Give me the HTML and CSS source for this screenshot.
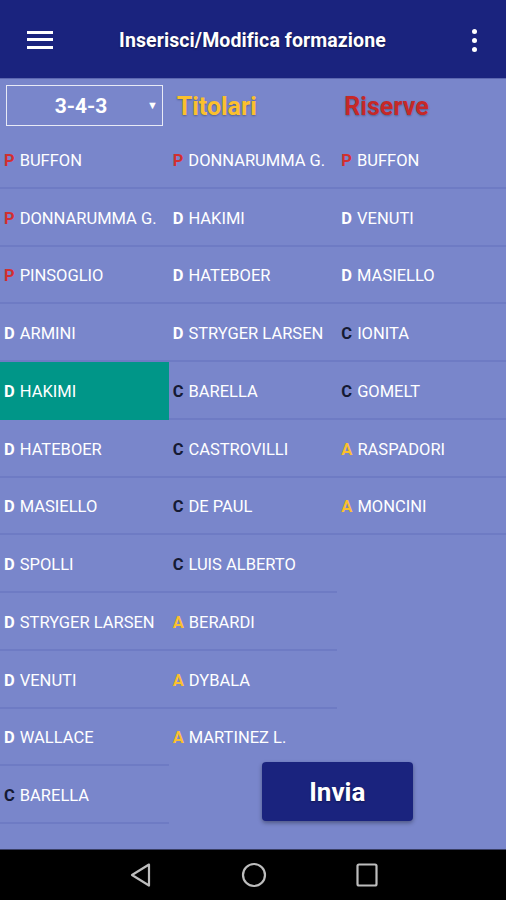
FILE: index.html
```html
<!DOCTYPE html>
<html lang="it">
<head>
<meta charset="utf-8">
<title>Inserisci/Modifica formazione</title>
<link rel="stylesheet" href="styles.css">
</head>
<body>
<div class="screen">
  <header class="appbar">
    <div class="menu-btn"><span></span><span></span><span></span></div>
    <h1 class="title">Inserisci/Modifica formazione</h1>
    <div class="kebab"><span></span><span></span><span></span></div>
  </header>

  <div class="subheader">
    <div class="cell">
      <div class="select"><span class="select-value">3-4-3</span><span class="select-arrow">&#9660;</span></div>
    </div>
    <div class="cell"><span class="head head-tit">Titolari</span></div>
    <div class="cell"><span class="head head-ris">Riserve</span></div>
  </div>

  <main class="lists">
    <ul class="list">
      <li class="row"><b class="r r-p">P</b>BUFFON</li>
      <li class="row"><b class="r r-p">P</b>DONNARUMMA G.</li>
      <li class="row"><b class="r r-p">P</b>PINSOGLIO</li>
      <li class="row"><b class="r r-d">D</b>ARMINI</li>
      <li class="row selected"><b class="r r-d">D</b>HAKIMI</li>
      <li class="row"><b class="r r-d">D</b>HATEBOER</li>
      <li class="row"><b class="r r-d">D</b>MASIELLO</li>
      <li class="row"><b class="r r-d">D</b>SPOLLI</li>
      <li class="row"><b class="r r-d">D</b>STRYGER LARSEN</li>
      <li class="row"><b class="r r-d">D</b>VENUTI</li>
      <li class="row"><b class="r r-d">D</b>WALLACE</li>
      <li class="row"><b class="r r-c">C</b>BARELLA</li>
    </ul>
    <div class="right">
      <div class="right-lists">
        <ul class="list list-tit">
          <li class="row"><b class="r r-p">P</b>DONNARUMMA G.</li>
          <li class="row"><b class="r r-d">D</b>HAKIMI</li>
          <li class="row"><b class="r r-d">D</b>HATEBOER</li>
          <li class="row"><b class="r r-d">D</b>STRYGER LARSEN</li>
          <li class="row"><b class="r r-c">C</b>BARELLA</li>
          <li class="row"><b class="r r-c">C</b>CASTROVILLI</li>
          <li class="row"><b class="r r-c">C</b>DE PAUL</li>
          <li class="row"><b class="r r-c">C</b>LUIS ALBERTO</li>
          <li class="row"><b class="r r-a">A</b>BERARDI</li>
          <li class="row"><b class="r r-a">A</b>DYBALA</li>
          <li class="row"><b class="r r-a">A</b>MARTINEZ L.</li>
        </ul>
        <ul class="list">
          <li class="row"><b class="r r-p">P</b>BUFFON</li>
          <li class="row"><b class="r r-d">D</b>VENUTI</li>
          <li class="row"><b class="r r-d">D</b>MASIELLO</li>
          <li class="row"><b class="r r-c">C</b>IONITA</li>
          <li class="row"><b class="r r-c">C</b>GOMELT</li>
          <li class="row"><b class="r r-a">A</b>RASPADORI</li>
          <li class="row"><b class="r r-a">A</b>MONCINI</li>
        </ul>
      </div>
      <button class="send" type="button">Invia</button>
    </div>
  </main>

  <nav class="navbar">
    <svg class="nav-ico" width="24" height="26" viewBox="0 0 24 26"><path d="M20 2.5 L3 13 L20 23.5 Z" fill="none" stroke="#bdbdbd" stroke-width="2.2" stroke-linejoin="round"/></svg>
    <svg class="nav-ico" width="26" height="26" viewBox="0 0 26 26"><circle cx="13" cy="13" r="11" fill="none" stroke="#bdbdbd" stroke-width="2.2"/></svg>
    <svg class="nav-ico" width="24" height="26" viewBox="0 0 24 26"><rect x="2.5" y="2.5" width="19" height="21" rx="1.5" fill="none" stroke="#bdbdbd" stroke-width="2.2"/></svg>
  </nav>
</div>
</body>
</html>
```

FILE: styles.css
```css
* { box-sizing: border-box; }
html, body { margin: 0; padding: 0; }
body {
  width: 506px;
  height: 900px;
  overflow: hidden;
  font-family: Roboto, "Liberation Sans", Arial, sans-serif;
  background: #7986cb;
}
.screen {
  display: flex;
  flex-direction: column;
  height: 900px;
}
.appbar {
  height: 79px;
  flex: none;
  background: #1a237e;
  display: flex;
  align-items: center;
  padding: 0 29px 0 27px;
  border-bottom: 1px solid #5c67b0;
}
.menu-btn {
  width: 26px;
  display: flex;
  flex-direction: column;
  gap: 4.5px;
  margin-top: 1px;
}
.menu-btn span {
  display: block;
  height: 3px;
  background: #fff;
}
.title {
  flex: 1;
  margin: 0;
  text-align: center;
  color: #fff;
  font-size: 19.5px;
  font-weight: 700;
  letter-spacing: 0.1px;
  text-shadow: 0 1px 2px rgba(0,0,0,0.5);
  margin-top: 3px;
  padding-right: 20px;
}
.kebab {
  width: 5px;
  display: flex;
  flex-direction: column;
  gap: 4px;
  margin-top: 2px;
}
.kebab span {
  width: 5px;
  height: 5px;
  border-radius: 50%;
  background: #fff;
}
.subheader {
  height: 52px;
  flex: none;
  display: grid;
  grid-template-columns: repeat(3, 1fr);
  align-items: center;
}
.cell { display: flex; align-items: center; }
.select {
  margin-left: 6px;
  width: 157px;
  height: 41px;
  margin-top: 1px;
  border: 1.5px solid #e8eaf6;
  display: flex;
  align-items: center;
}
.select-value {
  flex: 1;
  text-align: center;
  color: #fff;
  font-weight: 700;
  font-size: 21px;
  padding-left: 14px;
}
.select-arrow {
  color: #fff;
  font-size: 11px;
  margin-right: 4px;
  margin-left: 6px;
}
.head {
  font-size: 25px;
  font-weight: 700;
  text-shadow: 0 1px 2px rgba(0,0,0,0.3);
  margin-top: 2px;
}
.head-tit { color: #fbc02d; margin-left: 8px; }
.head-ris { color: #c62828; margin-left: 7px; }

.lists {
  flex: 1;
  display: grid;
  grid-template-columns: 1fr 2fr;
  min-height: 0;
}
.list {
  list-style: none;
  margin: 0;
  padding: 0;
}
.row {
  height: 57.75px;
  display: flex;
  align-items: center;
  padding-left: 4px;
  padding-top: 3px;
  color: #fff;
  font-size: 16.5px;
  border-bottom: 2px solid #6e7bc4;
}
.list-tit .row:last-child { border-bottom-color: transparent; }
.row.selected { background: #009688; border-bottom-color: #009688; }
.r {
  font-weight: 700;
  margin-right: 5px;
}
.r-p { color: #d32f2f; }
.r-d { color: #fff; }
.r-c { color: #151a33; }
.r-a { color: #fbc02d; }

.right {
  display: flex;
  flex-direction: column;
  align-items: center;
}
.right-lists {
  align-self: stretch;
  display: grid;
  grid-template-columns: repeat(2, 1fr);
}
.send {
  margin-top: -4px;
  width: 151px;
  height: 59px;
  border: none;
  border-radius: 4px;
  background: #1a237e;
  color: #fff;
  font-family: Roboto, "Liberation Sans", Arial, sans-serif;
  font-size: 26px;
  font-weight: 700;
  box-shadow: 0 2px 4px rgba(0,0,0,0.35);
  text-shadow: 0 1px 2px rgba(0,0,0,0.4);
}
.navbar {
  height: 51px;
  flex: none;
  background: #000;
  border-top: 1px solid #3a3f66;
  display: flex;
  align-items: center;
  justify-content: center;
  gap: 88px;
  padding-left: 2px;
}
.nav-ico { display: block; }
```
